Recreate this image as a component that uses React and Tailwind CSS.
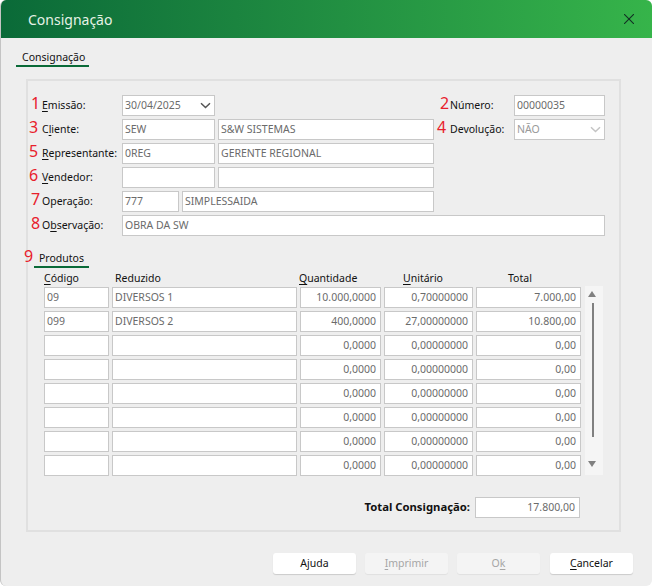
const FONT = "font-['Noto_Sans','Open_Sans',sans-serif]";

function Mn({ pre = "", u, post = "" }) {
  return (
    <>
      {pre}
      <span className="underline underline-offset-2">{u}</span>
      {post}
    </>
  );
}

function Field({ w, right, children, className = "" }) {
  return (
    <div
      className={`h-[21px] shrink-0 bg-white border border-[#c8c8c8] flex items-center text-[10.5px] whitespace-nowrap overflow-hidden ${right ? "justify-end pr-[4px]" : "pl-[2px]"} ${w} ${className || "text-[#6b6b6b]"}`}
    >
      {children}
    </div>
  );
}

function Num({ n, className }) {
  return (
    <span className={`absolute top-[-3px] text-[16px] leading-[22px] text-[#e8202c] ${className}`}>{n}</span>
  );
}

function Label({ w = "w-[80px]", n, nc, children }) {
  return (
    <div className={`relative shrink-0 text-[10.5px] text-[#111] leading-[21px] whitespace-nowrap ${w}`}>
      {n && <Num n={n} className={nc} />}
      {children}
    </div>
  );
}

function Chevron({ color }) {
  return (
    <svg width="11" height="7" viewBox="0 0 11 7" className="shrink-0">
      <path d="M1 1.2 L5.5 5.5 L10 1.2" fill="none" stroke={color} strokeWidth="1.5" />
    </svg>
  );
}

const rows = [
  ["09", "DIVERSOS 1", "10.000,0000", "0,70000000", "7.000,00"],
  ["099", "DIVERSOS 2", "400,0000", "27,00000000", "10.800,00"],
  ["", "", "0,0000", "0,00000000", "0,00"],
  ["", "", "0,0000", "0,00000000", "0,00"],
  ["", "", "0,0000", "0,00000000", "0,00"],
  ["", "", "0,0000", "0,00000000", "0,00"],
  ["", "", "0,0000", "0,00000000", "0,00"],
  ["", "", "0,0000", "0,00000000", "0,00"],
];

function Button({ disabled, className = "", children }) {
  return (
    <div
      className={`w-[83px] h-[21px] rounded-[3px] flex items-center justify-center text-[10.5px] ${disabled ? "bg-[#f4f4f4] text-[#a6a6a6] shadow-[0_1px_1px_rgba(0,0,0,0.06)]" : "bg-white text-[#111] shadow-[0_1px_1px_rgba(0,0,0,0.15)]"} ${className}`}
    >
      {children}
    </div>
  );
}

export default function App() {
  return (
    <div className={`${FONT} w-[652px] h-[586px] bg-[#eeeeee] border-l border-[#c4c4c4] rounded-[6px] overflow-hidden flex flex-col`}>
      <div className="h-[38px] shrink-0 bg-gradient-to-r from-[#0a6a38] to-[#36b44a] flex items-center justify-between pl-[27px] pr-[18px]">
        <span className="text-[14px] text-[#e6f2e6] mt-[1px]">Consignação</span>
        <svg width="10" height="10" viewBox="0 0 10 10">
          <path d="M0 0 L10 10 M10 0 L0 10" stroke="#123024" strokeWidth="1.1" fill="none" />
        </svg>
      </div>

      <div className="mt-[10px] ml-[15px] w-[73px] h-[19px] border-b-2 border-[#0a6a38] pl-[6px] text-[10.5px] leading-[18px] text-[#111]">
        Consignação
      </div>

      <div className="relative mt-[12px] ml-[25px] w-[595px] h-[453px] border-2 border-[#e0e0e0] pl-[14px] pr-[14px] pt-[14px]">
        <div className="flex flex-col gap-[3px]">
          <div className="flex justify-between">
            <div className="flex">
              <Label n="1" nc="left-[-11px]"><Mn u="E" post="missão:" /></Label>
              <Field w="w-[93px]" className="justify-between pr-[3px] text-[#6b6b6b]">
                <span>30/04/2025</span>
                <Chevron color="#555" />
              </Field>
            </div>
            <div className="flex">
              <Label w="w-[64px]" n="2" nc="left-[-10px]">Número:</Label>
              <Field w="w-[91px]">00000035</Field>
            </div>
          </div>
          <div className="flex justify-between">
            <div className="flex gap-[3px]">
              <Label w="w-[77px]" n="3" nc="left-[-13px]"><Mn pre="C" u="l" post="iente:" /></Label>
              <Field w="w-[93px]">SEW</Field>
              <Field w="w-[216px]">S&amp;W SISTEMAS</Field>
            </div>
            <div className="flex">
              <Label w="w-[64px]" n="4" nc="left-[-13px]">Devolução:</Label>
              <Field w="w-[91px]" className="justify-between pr-[3px] text-[#9a9a9a]">
                <span>NÃO</span>
                <Chevron color="#c4c4c4" />
              </Field>
            </div>
          </div>
          <div className="flex gap-[3px]">
            <Label w="w-[77px]" n="5" nc="left-[-13px]"><Mn u="R" post="epresentante:" /></Label>
            <Field w="w-[93px]">0REG</Field>
            <Field w="w-[216px]">GERENTE REGIONAL</Field>
          </div>
          <div className="flex gap-[3px]">
            <Label w="w-[77px]" n="6" nc="left-[-13px]"><Mn u="V" post="endedor:" /></Label>
            <Field w="w-[93px]" />
            <Field w="w-[216px]" />
          </div>
          <div className="flex gap-[3px]">
            <Label w="w-[77px]" n="7" nc="left-[-11px]">Operação:</Label>
            <Field w="w-[57px]">777</Field>
            <Field w="w-[252px]">SIMPLESSAIDA</Field>
          </div>
          <div className="flex gap-[3px]">
            <Label w="w-[77px]" n="8" nc="left-[-11px]"><Mn pre="O" u="b" post="servação:" /></Label>
            <Field w="w-[483px]">OBRA DA SW</Field>
          </div>
        </div>

        <div className="relative mt-[13px] ml-[-8px] w-[55px] h-[19px] border-b-2 border-[#0a6a38] pl-[5px] text-[10.5px] leading-[18px] text-[#111]">
          <Num n="9" className="left-[-10px] top-[-4px]" />
          Produtos
        </div>

        <div className="flex ml-[2px]">
          <div>
            <div className="flex h-[19px] text-[10.5px] leading-[21px] text-[#111]">
              <div className="w-[68px]"><Mn u="C" post="ódigo" /></div>
              <div className="w-[184px] pl-[3px]">Reduzido</div>
              <div className="w-[84px] pl-[3px]"><Mn u="Q" post="uantidade" /></div>
              <div className="w-[92px] pl-[23px]"><Mn u="U" post="nitário" /></div>
              <div className="w-[105px] pl-[36px]">Total</div>
            </div>
            <div className="flex flex-col gap-[3px]">
              {rows.map((r, i) => (
                <div key={i} className="flex gap-[3px]">
                  <Field w="w-[65px]">{r[0]}</Field>
                  <Field w="w-[185px]">{r[1]}</Field>
                  <Field w="w-[81px]" right>{r[2]}</Field>
                  <Field w="w-[89px]" right>{r[3]}</Field>
                  <Field w="w-[105px]" right>{r[4]}</Field>
                </div>
              ))}
            </div>
          </div>
          <div className="mt-[18px] ml-[4px] w-[18px] h-[189px] bg-[#f5f5f5] flex flex-col items-start pl-[3px] pt-[5px]">
            <svg width="8" height="6" viewBox="0 0 8 6" className="shrink-0"><path d="M4 0 L8 6 L0 6 Z" fill="#808080" /></svg>
            <div className="w-[2px] h-[134px] bg-[#808080] mt-[6px] ml-[4px]" />
            <svg width="8" height="6" viewBox="0 0 8 6" className="shrink-0 mt-[24px]"><path d="M0 0 L8 0 L4 6 Z" fill="#808080" /></svg>
          </div>
        </div>

        <div className="flex justify-end items-center gap-[5px] mt-[21px] mr-[25px]">
          <span className="text-[11.3px] font-bold text-[#111]">Total Consignação:</span>
          <Field w="w-[105px]" right>17.800,00</Field>
        </div>
      </div>

      <div className="flex justify-end gap-[9px] mt-[21px] pr-[18px]">
        <Button>Ajuda</Button>
        <Button disabled><Mn u="I" post="mprimir" /></Button>
        <Button disabled><Mn pre="O" u="k" /></Button>
        <Button className="ml-[1px] mr-[1px]"><Mn u="C" post="ancelar" /></Button>
      </div>
    </div>
  );
}
